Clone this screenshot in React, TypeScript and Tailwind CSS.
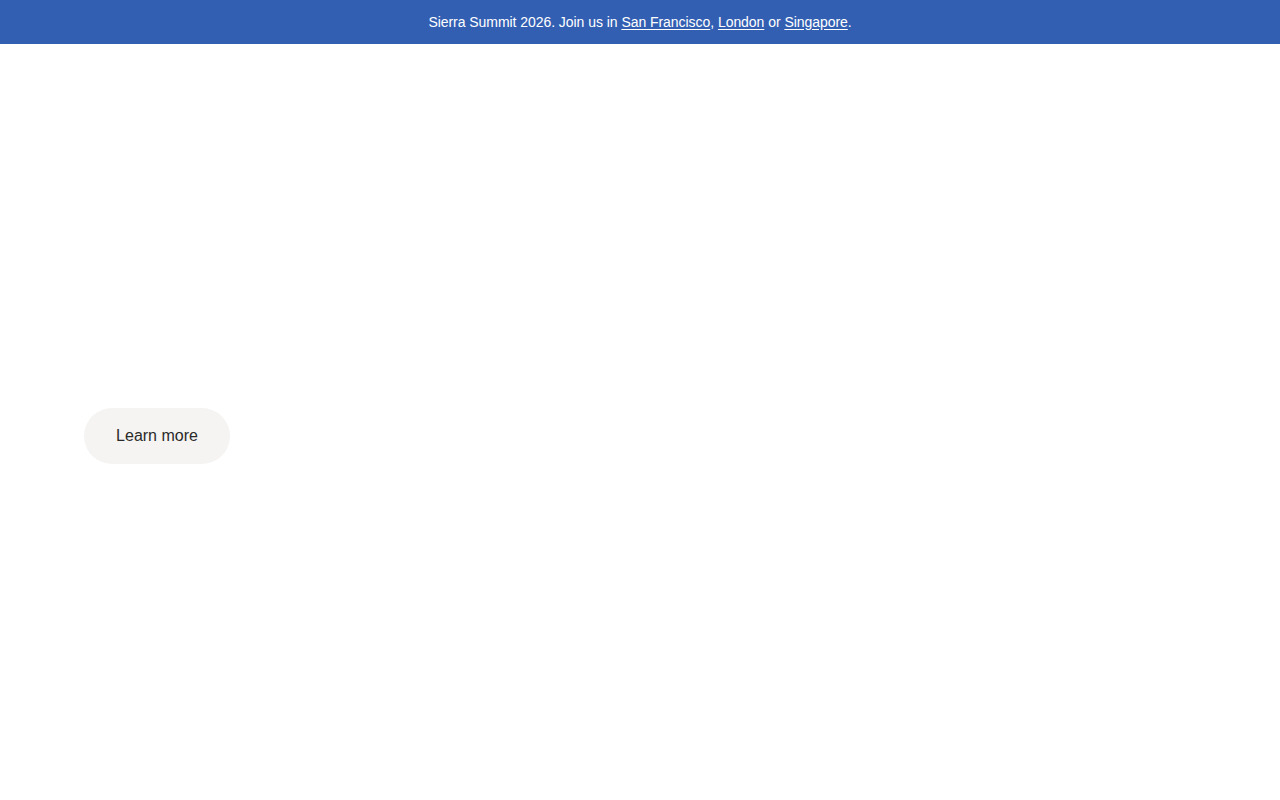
export default function App() {
  return (
    <div className="min-h-[800px] bg-white" style={{ fontFamily: '"Liberation Sans", Arial, sans-serif' }}>
      <div className="h-[44px] bg-[#335fb3] flex items-center justify-center text-white text-[14px] tracking-[-0.05px]">
        <span>
          Sierra Summit 2026. Join us in{' '}
          <a href="#" className="underline underline-offset-2">San Francisco</a>,{' '}
          <a href="#" className="underline underline-offset-2">London</a> or{' '}
          <a href="#" className="underline underline-offset-2">Singapore</a>.
        </span>
      </div>
      <main className="pl-[84px] pt-[364px]">
        <button className="h-[56px] w-[146px] rounded-full bg-[#f5f4f2] text-[#2a2a2a] text-[16px] flex items-center justify-center">
          Learn more
        </button>
      </main>
    </div>
  );
}
